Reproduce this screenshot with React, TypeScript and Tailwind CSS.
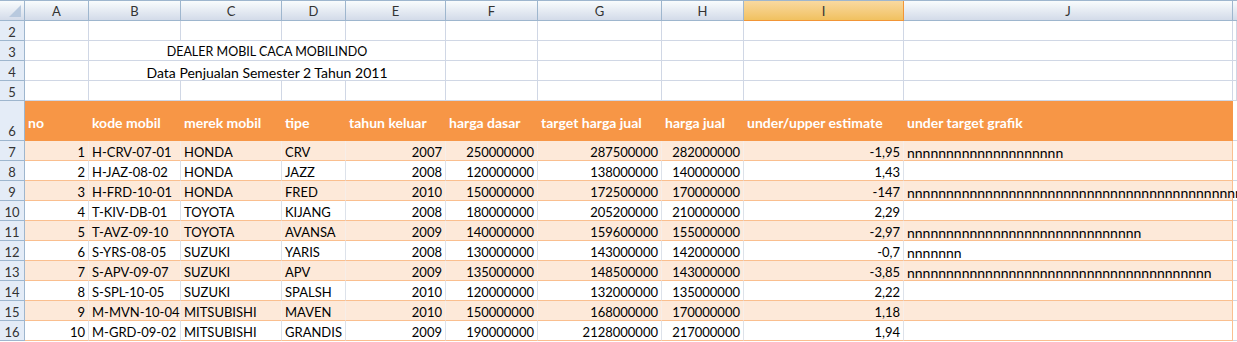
const grid =
  "grid grid-cols-[25px_64px_92px_101px_64px_100px_92px_124px_82px_160px_329px_1fr]";

const letters = ["A", "B", "C", "D", "E", "F", "G", "H", "I", "J"];

const data: [number, string, string, string, number, number, number, number, string, number][] = [
  [1, "H-CRV-07-01", "HONDA", "CRV", 2007, 250000000, 287500000, 282000000, "-1,95", 20],
  [2, "H-JAZ-08-02", "HONDA", "JAZZ", 2008, 120000000, 138000000, 140000000, "1,43", 0],
  [3, "H-FRD-10-01", "HONDA", "FRED", 2010, 150000000, 172500000, 170000000, "-147", 60],
  [4, "T-KIV-DB-01", "TOYOTA", "KIJANG", 2008, 180000000, 205200000, 210000000, "2,29", 0],
  [5, "T-AVZ-09-10", "TOYOTA", "AVANSA", 2009, 140000000, 159600000, 155000000, "-2,97", 30],
  [6, "S-YRS-08-05", "SUZUKI", "YARIS", 2008, 130000000, 143000000, 142000000, "-0,7", 7],
  [7, "S-APV-09-07", "SUZUKI", "APV", 2009, 135000000, 148500000, 143000000, "-3,85", 39],
  [8, "S-SPL-10-05", "SUZUKI", "SPALSH", 2010, 120000000, 132000000, 135000000, "2,22", 0],
  [9, "M-MVN-10-04", "MITSUBISHI", "MAVEN", 2010, 150000000, 168000000, 170000000, "1,18", 0],
  [10, "M-GRD-09-02", "MITSUBISHI", "GRANDIS", 2009, 190000000, 2128000000, 217000000, "1,94", 0],
];

const headers = [
  "no",
  "kode mobil",
  "merek mobil",
  "tipe",
  "tahun keluar",
  "harga dasar",
  "target harga jual",
  "harga jual",
  "under/upper estimate",
  "under target grafik",
];

function RowNum({ n, tall }: { n: number; tall?: boolean }) {
  return (
    <div
      className={`flex justify-center border-r border-b border-[#9eb6ce] bg-[#e4ecf7] text-[13px] text-[#333] ${
        tall ? "items-end pb-[2px]" : "items-center pt-[4px]"
      }`}
    >
      {n}
    </div>
  );
}

function Blank() {
  return <div className="border-r border-b border-[#d0d7e5]" />;
}

export default function App() {
  return (
    <div
      className="w-[1237px] h-[342px] overflow-hidden bg-white text-[14px] leading-none text-black"
      style={{ fontFamily: "Lato, 'Liberation Sans', sans-serif" }}
    >
      {/* column headers */}
      <div className={`${grid} h-[21px] border-t border-[#9eb6ce]`}>
        <div className="relative border-r border-b border-[#9eb6ce] bg-linear-to-b from-[#f9fcfd] to-[#d3dbe9]">
          <div className="absolute right-[3px] bottom-[3px] w-0 h-0 border-l-[12px] border-l-transparent border-b-[12px] border-b-[#b8c9de]" />
        </div>
        {letters.map((l) => (
          <div
            key={l}
            className={
              l === "I"
                ? "flex items-center justify-center pt-[2px] border-r border-b border-[#f29536] bg-linear-to-b from-[#f9d99f] to-[#f1c15f] text-[13px] text-[#333]"
                : "flex items-center justify-center pt-[2px] border-r border-b border-[#9eb6ce] bg-linear-to-b from-[#f9fcfd] to-[#d3dbe9] text-[13px] text-[#333]"
            }
          >
            {l}
          </div>
        ))}
        <div className="border-b border-[#9eb6ce] bg-linear-to-b from-[#f9fcfd] to-[#d3dbe9]" />
      </div>

      {/* rows 2-5 */}
      {[2, 3, 4, 5].map((r) => (
        <div key={r} className={`${grid} h-[20px]`}>
          <RowNum n={r} />
          <Blank />
          {r === 3 || r === 4 ? (
            <div
              className={`col-span-4 flex items-center justify-center pt-[4px] border-r border-b border-[#d0d7e5] whitespace-nowrap ${
                r === 3 ? "text-[12.5px]" : "text-[14px]"
              }`}
            >
              {r === 3 ? "DEALER MOBIL CACA MOBILINDO" : "Data Penjualan Semester 2 Tahun 2011"}
            </div>
          ) : (
            <>
              <Blank />
              <Blank />
              <Blank />
              <Blank />
            </>
          )}
          <Blank />
          <Blank />
          <Blank />
          <Blank />
          <Blank />
          <Blank />
        </div>
      ))}

      {/* row 6 header */}
      <div className={`${grid} h-[40px]`}>
        <RowNum n={6} tall />
        {headers.map((h) => (
          <div
            key={h}
            className="flex items-center px-[3px] pt-[4px] bg-[#f79646] text-white font-bold whitespace-nowrap"
          >
            {h}
          </div>
        ))}
        <div className="border-b border-[#d0d7e5]" />
      </div>

      {/* data rows */}
      {data.map((d, i) => {
        const odd = i % 2 === 0;
        const cell = odd
          ? "flex items-center px-[3px] pt-[4px] text-[13px] whitespace-nowrap bg-[#fde9d9] border-b border-r border-b-[#fabf8f] border-r-[#f7eee8]"
          : "flex items-center px-[3px] pt-[4px] text-[13px] whitespace-nowrap bg-white border-b border-r border-b-[#fabf8f] border-r-[#dde2ea]";
        return (
          <div key={d[0]} className={`${grid} h-[20px]`}>
            <RowNum n={i + 7} />
            <div className={`${cell} justify-end`}>{d[0]}</div>
            <div className={cell}>{d[1]}</div>
            <div className={cell}>{d[2]}</div>
            <div className={cell}>{d[3]}</div>
            <div className={`${cell} justify-end`}>{d[4]}</div>
            <div className={`${cell} justify-end`}>{d[5]}</div>
            <div className={`${cell} justify-end`}>{d[6]}</div>
            <div className={`${cell} justify-end`}>{d[7]}</div>
            <div className={`${cell} justify-end`}>{d[8]}</div>
            <div className={`${cell} text-[14px] overflow-visible relative z-10 border-r-[#fabf8f]`}>
              {"n".repeat(d[9])}
            </div>
            <div className="relative border-b border-[#d0d7e5]">
              {i === 9 && (
                <div className="absolute left-[-7px] bottom-[2px] w-0 h-0 border-l-[4px] border-l-transparent border-b-[4px] border-b-[#4d5b7a]" />
              )}
            </div>
          </div>
        );
      })}
    </div>
  );
}
